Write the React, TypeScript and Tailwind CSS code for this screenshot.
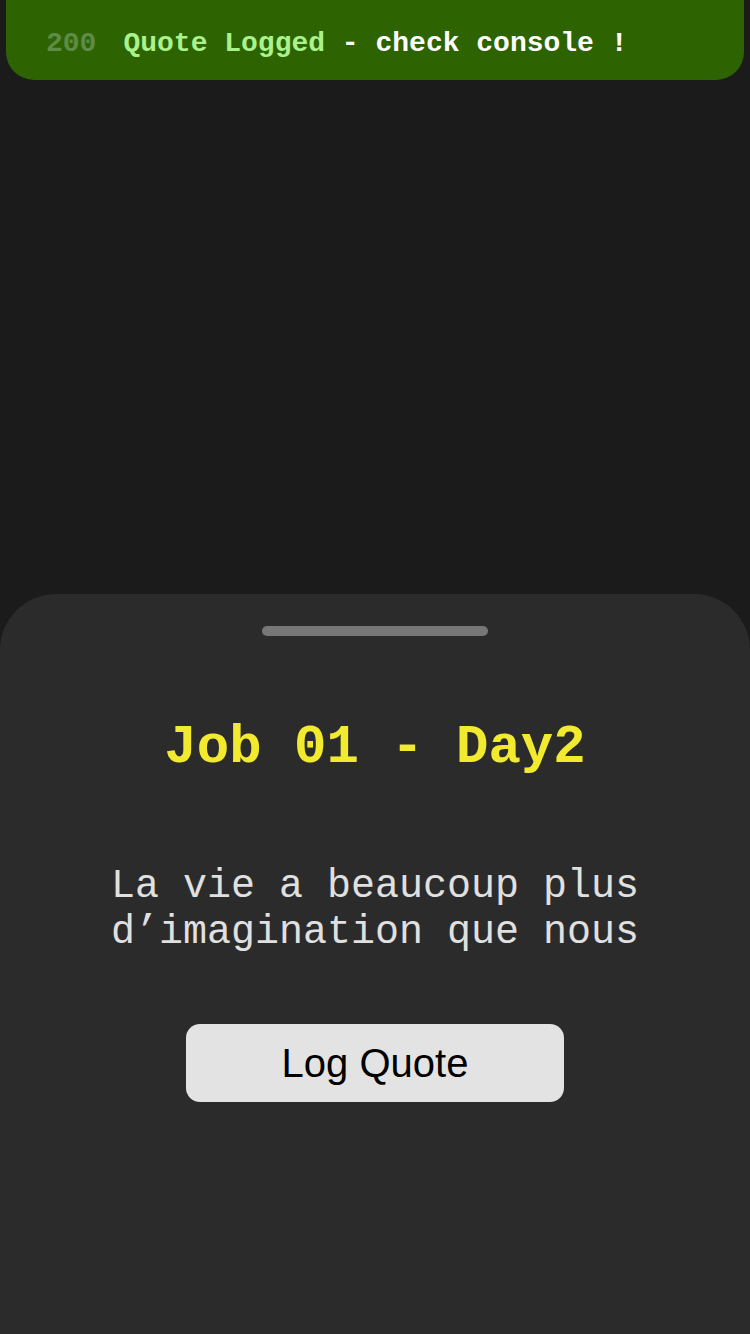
export default function App() {
  const logQuote = () => {
    console.log("La vie a beaucoup plus d’imagination que nous");
  };

  return (
    <div className="h-screen w-full bg-[#1b1b1b] flex flex-col overflow-hidden">
      <div className="mx-[6px] h-[80px] rounded-b-[28px] bg-[#2d6300] flex items-center pl-[40px] pt-[7px] font-['Liberation_Mono',monospace] font-bold text-[28px] leading-[32px]">
        <span className="text-[#5d8c46]">200</span>
        <span className="ml-[27px] text-[#a9f28c]">Quote Logged</span>
        <span className="text-white whitespace-pre"> - check console !</span>
      </div>

      <div className="mt-auto h-[740px] rounded-t-[56px] bg-[#2b2b2b] flex flex-col items-center pt-[32px]">
        <div className="w-[226px] h-[10px] rounded-full bg-[#777777]" />

        <h1 className="mt-[80px] font-['Liberation_Mono',monospace] font-bold text-[54px] leading-[64px] text-[#f2ea2e]">
          Job 01 - Day2
        </h1>

        <p className="mt-[84px] w-[560px] text-center font-['Liberation_Mono',monospace] text-[40px] leading-[46px] text-[#e0e0e0]">
          La vie a beaucoup plus d’imagination que nous
        </p>

        <button
          onClick={logQuote}
          className="mt-[68px] w-[378px] h-[78px] rounded-[14px] bg-[#e3e3e3] font-['Liberation_Sans',Arial,sans-serif] text-[40px] text-black"
        >
          Log Quote
        </button>
      </div>
    </div>
  );
}
